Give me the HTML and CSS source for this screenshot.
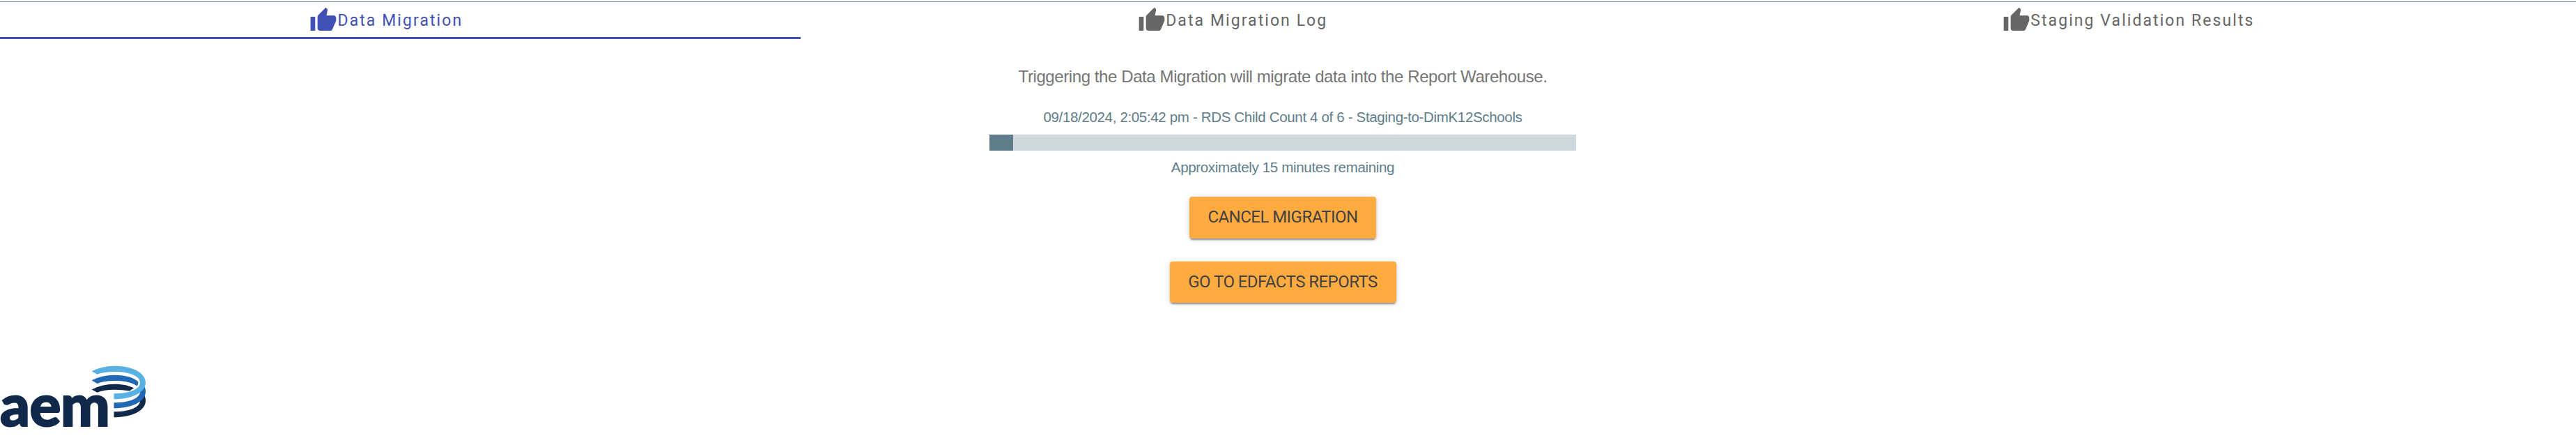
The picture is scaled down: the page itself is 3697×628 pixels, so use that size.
FILE: index.html
```html
<!DOCTYPE html>
<html lang="en">
<head>
<meta charset="utf-8">
<title>Data Migration</title>
<link rel="stylesheet" href="styles.css">
</head>
<body>
<svg class="defs" aria-hidden="true"><symbol id="thumb" viewBox="0 0 24 24"><path d="M1 21h4V9H1v12zm22-11c0-1.100-.9-2-2-2h-6.310l.95-4.570.03-.32c0-.41-.17-.79-.44-1.060L14.170 1 7.590 7.590C7.220 7.950 7 8.450 7 9v10c0 1.100.9 2 2 2h9c.83 0 1.540-.5 1.840-1.220l3.020-7.050c.09-.23.14-.47.14-.73v-2z"/></symbol></svg>
<nav class="tabs">
  <a class="tab tab-active"><svg class="tab-icon"><use href="#thumb"/></svg><span class="tab-label">Data Migration</span></a>
  <a class="tab"><svg class="tab-icon"><use href="#thumb"/></svg><span class="tab-label">Data Migration Log</span></a>
  <a class="tab"><svg class="tab-icon"><use href="#thumb"/></svg><span class="tab-label">Staging Validation Results</span></a>
</nav>
<main class="panel">
  <p class="intro">Triggering the Data Migration will migrate data into the Report Warehouse.</p>
  <p class="status">09/18/2024, 2:05:42 pm - RDS Child Count 4 of 6 - Staging-to-DimK12Schools</p>
  <div class="progress"><div class="progress-fill" style="width:34px"></div></div>
  <p class="remaining">Approximately 15 minutes remaining</p>
  <button class="btn btn-cancel">CANCEL MIGRATION</button>
  <button class="btn btn-reports">GO TO EDFACTS REPORTS</button>
</main>
<footer class="footer">
  <svg class="logo" viewBox="0 0 240 128" width="240" height="128">
    <text class="wordmark" x="0" y="111">aem</text>
    <path fill="#10294b" d="M131.700 58.500Q146 50.700 164 50.700C177 50.700 186 53 192 56.500L186 60.500Q176 58.700 164 58.700Q149 58.700 139.500 62.700Z"/>
    <path fill="#10294b" d="M163.500 98.300C191 98.300 209 88 209 74.500Q209 69 206 65L201 74.500C201 84 186 90.300 163.500 90.300Z"/>
    <path fill="#2168b5" d="M131.700 45.300Q146 37.700 164 37.700C182 37.700 193 42 198.500 47.500Q199 51 196.500 53.500C190 48.500 180 46 164 46Q149 46 139.500 50Z"/>
    <path fill="#2168b5" d="M163.500 85.300C191 85.300 209 75 209 61.500Q209 56 206 52L201 61.500C201 71 186 77.300 163.500 77.300Z"/>
    <path fill="#58b0e3" d="M131.700 32.300Q146 24.700 164 24.700C191 24.700 209 35 209 48.500S191 72.300 163.500 72.300V64.300C186 64.300 201 58 201 48.500S186 33 164 33Q149 33 139.500 36.700Z"/>
  </svg>
</footer>
</body>
</html>
```
FILE: styles.css
```css
body{margin:0;background:#fff;width:3697px;height:628px;overflow:hidden;display:flex;flex-direction:column}
.defs{display:none}
.tabs{display:flex;box-sizing:border-box;width:3760px;margin:2px 0 0 -40px;height:54px;border-top:1px solid #6c8b96}
.tab{flex:1 0 auto;display:flex;align-items:center;justify-content:center;box-sizing:border-box;padding-top:2px;border-bottom:3px solid transparent;color:#666;font:400 23px/1 Roboto,sans-serif;letter-spacing:2.07px}
.tab-active{color:#3f51b5;border-bottom-color:#3f51b5}
.tab-icon{width:40px;height:40px;fill:currentColor}
.panel{width:3682px;display:flex;flex-direction:column;align-items:center;font-family:"Liberation Sans",Arial,sans-serif}
.panel p{margin:0}
.panel .intro{font-size:24px;line-height:30px;letter-spacing:-.41px;color:#757575;margin-top:39px}
.panel .status{font-size:20.5px;line-height:26px;letter-spacing:-.34px;color:#607d8b;margin-top:30px}
.progress{width:842px;height:23px;background:#cfd8dc;margin-top:12px}
.progress-fill{height:100%;background:#607d8b}
.panel .remaining{font-size:20.5px;line-height:26px;letter-spacing:-.33px;color:#607d8b;margin-top:11px}
.btn{border:0;border-radius:4px;background:#ffab40;color:#424242;font:400 24px/1 Roboto,sans-serif;letter-spacing:-.54px;padding:0 0 2px;box-shadow:0 4px 2px -2px rgba(0,0,0,.25),0 2px 3px rgba(0,0,0,.18),0 1px 8px rgba(0,0,0,.14)}
.btn-cancel{width:268px;height:60px;margin-top:29px}
.btn-reports{width:325px;height:59px;margin-top:33px}
.footer{margin-top:66px}
.logo{display:block}
.wordmark{font:900 84px Lato,sans-serif;letter-spacing:-.5px;fill:#10294b;stroke:#10294b;stroke-width:2}
```
